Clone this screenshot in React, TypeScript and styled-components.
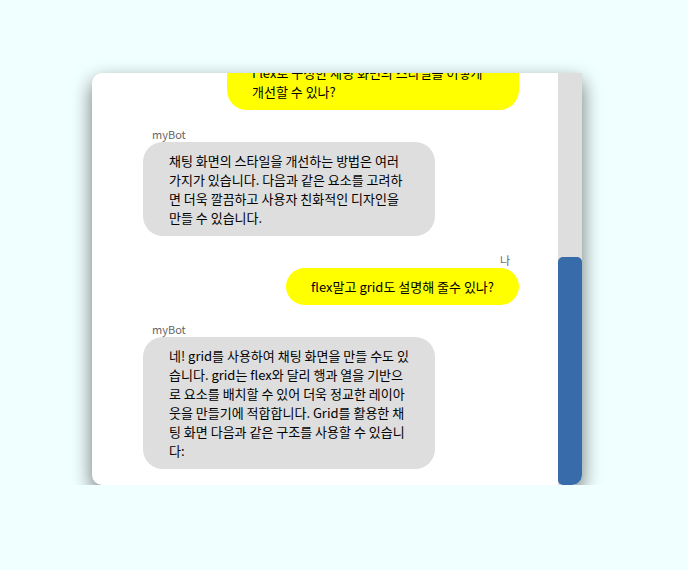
import { useLayoutEffect, useRef, useState } from 'react';
import styled, { createGlobalStyle } from 'styled-components';

const GlobalStyle = createGlobalStyle`
  html, body {
    margin: 0;
    padding: 0;
    background: azure;
  }
  body {
    font-family: "Noto Sans CJK KR", "Noto Sans", sans-serif;
  }
`;

const Page = styled.div`
  padding: 73px 0 0 92px;
`;

const ChatFrame = styled.div`
  width: 490px;
  height: 412px;
  display: flex;
  background: #fff;
  border-radius: 10px 0 10px 10px;
  overflow: hidden;
  box-shadow: 0 8px 20px rgba(0, 0, 0, 0.55);
`;

const MessageList = styled.div`
  flex: 1;
  box-sizing: border-box;
  overflow-y: auto;
  scrollbar-width: none;
  padding: 16px 39px 16px 51px;
  display: flex;
  flex-direction: column;
  gap: 16px;

  &::-webkit-scrollbar {
    display: none;
  }
`;

const ScrollTrack = styled.div`
  width: 24px;
  flex-shrink: 0;
  background: #dedede;
  display: flex;
  flex-direction: column;
  justify-content: flex-end;
`;

const ScrollThumb = styled.div`
  background: #386ba9;
  border-radius: 5px;
`;

const Message = styled.div<{ $mine?: boolean }>`
  display: flex;
  flex-direction: column;
  align-items: ${(p) => (p.$mine ? 'flex-end' : 'flex-start')};
  flex-shrink: 0;
`;

const Sender = styled.span`
  font-size: 11px;
  color: #666;
  padding: 0 9px;
`;

const Bubble = styled.div<{ $mine?: boolean }>`
  max-width: 292px;
  box-sizing: border-box;
  padding: ${(p) => (p.$mine ? '9px 25px' : '9px 26px')};
  border-radius: 20px;
  font-size: 13px;
  color: #000;
  background: ${(p) => (p.$mine ? '#ffff00' : '#dedede')};
`;

const messages = [
  { mine: false, text: '안녕하세요! 무엇을 도와드릴까요? 궁금한 점이 있으면 편하게 물어보세요.' },
  { mine: true, text: '채팅 UI를 만들고 싶어.' },
  {
    mine: false,
    text: '좋습니다! 채팅 UI는 보통 메시지 목록과 입력창으로 구성됩니다. Flex를 사용하면 메시지를 왼쪽과 오른쪽으로 쉽게 정렬할 수 있습니다.',
  },
  { mine: true, text: 'Flex로 구성한 채팅 화면의 스타일을 어떻게 개선할 수 있나?' },
  {
    mine: false,
    text: '채팅 화면의 스타일을 개선하는 방법은 여러 가지가 있습니다. 다음과 같은 요소를 고려하면 더욱 깔끔하고 사용자 친화적인 디자인을 만들 수 있습니다.',
  },
  { mine: true, text: 'flex말고 grid도 설명해 줄수 있나?' },
  {
    mine: false,
    text: '네! grid를 사용하여 채팅 화면을 만들 수도 있습니다. grid는 flex와 달리 행과 열을 기반으로 요소를 배치할 수 있어 더욱 정교한 레이아웃을 만들기에 적합합니다. Grid를 활용한 채팅 화면 다음과 같은 구조를 사용할 수 있습니다:',
  },
];

export default function App() {
  const listRef = useRef<HTMLDivElement>(null);
  const [thumbRatio, setThumbRatio] = useState(1);

  useLayoutEffect(() => {
    const el = listRef.current;
    if (!el) return;
    el.scrollTop = el.scrollHeight;
    setThumbRatio(el.clientHeight / el.scrollHeight);
  }, []);

  return (
    <Page>
      <GlobalStyle />
      <ChatFrame>
        <MessageList ref={listRef}>
          {messages.map((m, i) => (
            <Message key={i} $mine={m.mine}>
              <Sender>{m.mine ? '나' : 'myBot'}</Sender>
              <Bubble $mine={m.mine}>{m.text}</Bubble>
            </Message>
          ))}
        </MessageList>
        <ScrollTrack>
          <ScrollThumb style={{ height: `${thumbRatio * 100}%` }} />
        </ScrollTrack>
      </ChatFrame>
    </Page>
  );
}
